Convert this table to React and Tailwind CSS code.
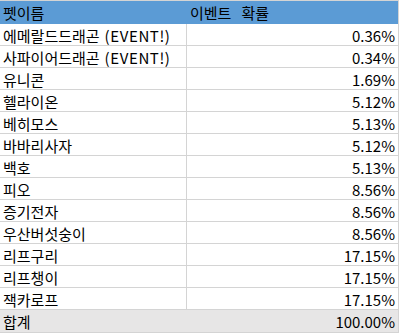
import React from 'react';

const rows = [
  ['에메랄드드래곤 (EVENT!)', '0.36%'],
  ['사파이어드래곤 (EVENT!)', '0.34%'],
  ['유니콘', '1.69%'],
  ['헬라이온', '5.12%'],
  ['베히모스', '5.13%'],
  ['바바리사자', '5.12%'],
  ['백호', '5.13%'],
  ['피오', '8.56%'],
  ['증기전자', '8.56%'],
  ['우산버섯숭이', '8.56%'],
  ['리프구리', '17.15%'],
  ['리프챙이', '17.15%'],
  ['잭카로프', '17.15%'],
];

export default function App() {
  return (
    <div
      className="w-[399px] h-[334px] bg-white text-black text-[15px] leading-none overflow-hidden"
      style={{ fontFamily: '"Noto Sans CJK KR", "Noto Sans", sans-serif' }}
    >
      <div className="w-[399px] border-t border-r border-[#d4d4d4]">
        {/* header */}
        <div className="flex h-[23px] bg-[#5b9bd5] items-center">
          <div className="w-[187px] pl-[3px]">펫이름</div>
          <div className="flex-1 pl-[3px] whitespace-pre">이벤트   확률</div>
        </div>

        {rows.map(([name, pct]) => (
          <div key={name} className="flex h-[22px] border-b border-[#d4d4d4]">
            <div className="w-[187px] border-r border-[#d4d4d4] pl-[3px] pt-px flex items-center whitespace-nowrap">
              {name.includes('(') ? (
                <>
                  {name.split(' (')[0]}
                  <span className="ml-[5px] tracking-[0.6px]">({name.split(' (')[1]}</span>
                </>
              ) : (
                name
              )}
            </div>
            <div className="flex-1 pr-[3px] pt-px flex items-center justify-end">{pct}</div>
          </div>
        ))}

        {/* total */}
        <div className="flex h-[23px] bg-[#e7e6e6] items-center border-b border-[#d4d4d4] pt-px">
          <div className="w-[187px] pl-[3px]">합계</div>
          <div className="flex-1 pr-[3px] text-right">100.00%</div>
        </div>
      </div>
    </div>
  );
}
